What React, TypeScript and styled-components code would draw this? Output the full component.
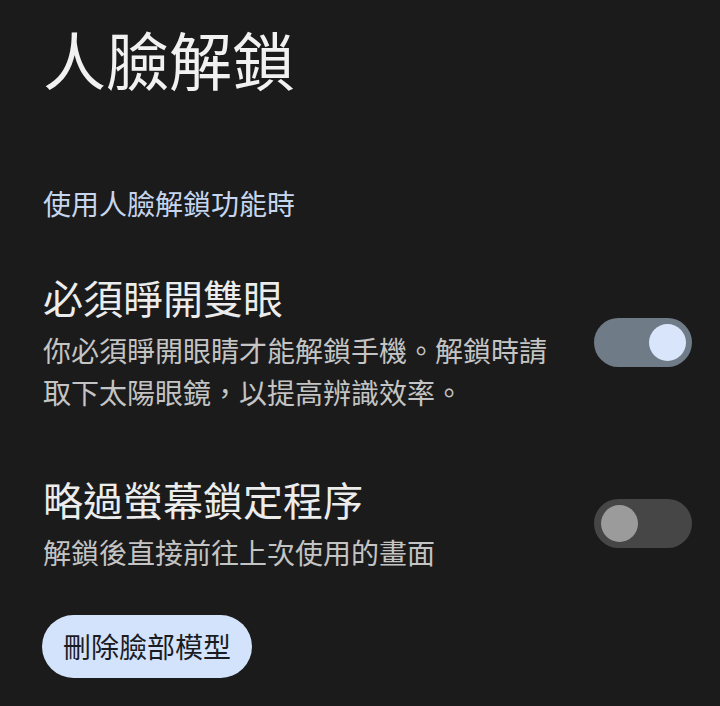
import React, { useState } from 'react'
import styled, { createGlobalStyle } from 'styled-components'

const GlobalStyle = createGlobalStyle`
  html, body {
    margin: 0;
    padding: 0;
    background: #1b1b1b;
  }
  body {
    font-family: "Noto Sans CJK TC", "Noto Sans CJK SC", "Noto Sans", sans-serif;
    -webkit-font-smoothing: antialiased;
  }
`

const Page = styled.div`
  box-sizing: border-box;
  width: 720px;
  height: 706px;
  padding: 18px 28px 0 43px;
  background: #1b1b1b;
  overflow: hidden;
`

const Title = styled.h1`
  margin: 0 0 84px;
  font-size: 63px;
  font-weight: 400;
  line-height: 80px;
  color: #f1f1f1;
`

const SectionLabel = styled.div`
  margin: 0 0 47px;
  font-size: 28px;
  line-height: 42px;
  color: #c6d6ef;
`

const Row = styled.div<{ $gap?: number }>`
  display: flex;
  align-items: center;
  justify-content: space-between;
  gap: 40px;
  margin-bottom: ${({ $gap }) => $gap ?? 0}px;
`

const RowText = styled.div`
  flex: 1;
  min-width: 0;
`

const RowTitle = styled.div`
  margin-bottom: 6px;
  font-size: 40px;
  line-height: 52px;
  color: #ececec;
`

const RowDesc = styled.div`
  max-width: 506px;
  font-size: 28px;
  line-height: 42px;
  color: #c4c4c4;
`

const Track = styled.button<{ $on: boolean }>`
  flex: none;
  position: relative;
  width: 98px;
  height: 49px;
  padding: 0;
  border: none;
  border-radius: 25px;
  background: ${({ $on }) => ($on ? '#707b88' : '#464646')};
  cursor: pointer;
`

const Thumb = styled.span<{ $on: boolean }>`
  position: absolute;
  top: 6px;
  left: ${({ $on }) => ($on ? '55px' : '7px')};
  width: 37px;
  height: 37px;
  border-radius: 50%;
  background: ${({ $on }) => ($on ? '#d8e5fb' : '#9b9b9b')};
`

const PillButton = styled.button`
  margin-top: 42px;
  margin-left: -1px;
  height: 63px;
  padding: 0 21px;
  border: none;
  border-radius: 32px;
  background: #d4e3fc;
  color: #1b1c1f;
  font-family: inherit;
  font-size: 28px;
  line-height: 63px;
  cursor: pointer;
`

const Toggle = ({ on, onChange }: { on: boolean; onChange: () => void }) => (
  <Track $on={on} onClick={onChange} role="switch" aria-checked={on}>
    <Thumb $on={on} />
  </Track>
)

export default function App() {
  const [eyes, setEyes] = useState(true)
  const [skip, setSkip] = useState(false)

  return (
    <>
      <GlobalStyle />
      <Page>
        <Title>人臉解鎖</Title>
        <SectionLabel>使用人臉解鎖功能時</SectionLabel>

        <Row $gap={60}>
          <RowText>
            <RowTitle>必須睜開雙眼</RowTitle>
            <RowDesc>你必須睜開眼睛才能解鎖手機。解鎖時請取下太陽眼鏡，以提高辨識效率。</RowDesc>
          </RowText>
          <Toggle on={eyes} onChange={() => setEyes(!eyes)} />
        </Row>

        <Row>
          <RowText>
            <RowTitle>略過螢幕鎖定程序</RowTitle>
            <RowDesc>解鎖後直接前往上次使用的畫面</RowDesc>
          </RowText>
          <Toggle on={skip} onChange={() => setSkip(!skip)} />
        </Row>

        <PillButton>刪除臉部模型</PillButton>
      </Page>
    </>
  )
}
